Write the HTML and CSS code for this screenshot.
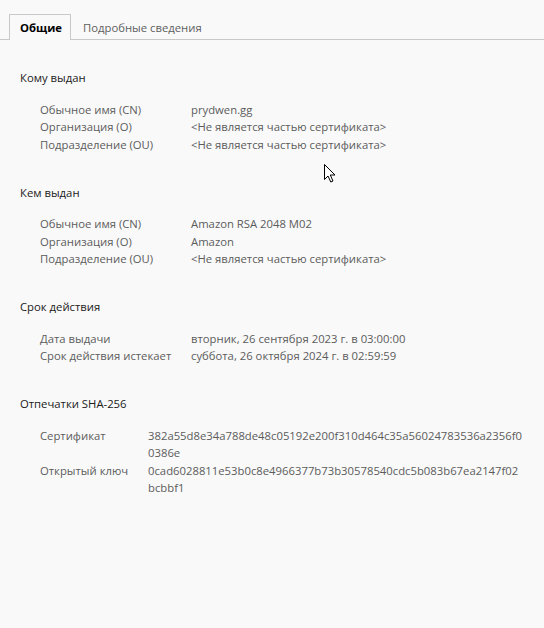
FILE: index.html
```html
<!DOCTYPE html>
<html lang="ru">
<head>
<meta charset="utf-8">
<title>Сертификат</title>
<link rel="stylesheet" href="styles.css">
</head>
<body>
<div class="tabs">
  <div class="tab active">Общие</div>
  <div class="tab">Подробные сведения</div>
</div>
<main class="content">
  <section class="section">
    <h2 class="heading">Кому выдан</h2>
    <div class="grid">
      <div class="label">Обычное имя (CN)</div><div class="value">prydwen.gg</div>
      <div class="label">Организация (O)</div><div class="value">&lt;Не является частью сертификата&gt;</div>
      <div class="label">Подразделение (OU)</div><div class="value">&lt;Не является частью сертификата&gt;</div>
    </div>
  </section>
  <section class="section">
    <h2 class="heading">Кем выдан</h2>
    <div class="grid">
      <div class="label">Обычное имя (CN)</div><div class="value">Amazon RSA 2048 M02</div>
      <div class="label">Организация (O)</div><div class="value">Amazon</div>
      <div class="label">Подразделение (OU)</div><div class="value">&lt;Не является частью сертификата&gt;</div>
    </div>
  </section>
  <section class="section">
    <h2 class="heading">Срок действия</h2>
    <div class="grid">
      <div class="label">Дата выдачи</div><div class="value">вторник, 26 сентября 2023 г. в 03:00:00</div>
      <div class="label">Срок действия истекает</div><div class="value">суббота, 26 октября 2024 г. в 02:59:59</div>
    </div>
  </section>
  <section class="section">
    <h2 class="heading">Отпечатки SHA-256</h2>
    <div class="grid grid-hash">
      <div class="label">Сертификат</div>
      <div class="value"><span class="hash-line">382a55d8e34a788de48c05192e200f310d464c35a56024783536a2356f0</span><span class="hash-line">0386e</span></div>
      <div class="label">Открытый ключ</div>
      <div class="value"><span class="hash-line">0cad6028811e53b0c8e4966377b73b30578540cdc5b083b67ea2147f02</span><span class="hash-line">bcbbf1</span></div>
    </div>
  </section>
</main>
<svg class="cursor" width="14" height="21" viewBox="0 0 14 21" aria-hidden="true">
  <path d="M1.5 1.5 L1.5 16.5 L5 13 L7.8 19 L10 18 L7.3 12 L12 12 Z" fill="#fff" stroke="#000" stroke-width="1" stroke-linejoin="miter"/>
</svg>
</body>
</html>
```
FILE: styles.css
```css
html, body {
  margin: 0;
  padding: 0;
  background: #f9f9f9;
}
body {
  font-family: "Open Sans", "Noto Sans", sans-serif;
  font-size: 11.3px;
  line-height: 17.5px;
  color: #1b1b1b;
  position: relative;
  min-height: 628px;
}
.tabs {
  display: flex;
  padding: 14px 0 0 9px;
  border-bottom: 1px solid #c9c9c9;
  height: 25px;
  box-sizing: content-box;
}
.tab {
  height: 25px;
  box-sizing: border-box;
  padding: 4px 11px 0 11px;
  color: #5f5f5f;
  border: 1px solid transparent;
  border-bottom: none;
}
.tab.active {
  color: #000;
  font-weight: 700;
  border-color: #c9c9c9;
  background: #f9f9f9;
  height: 26px;
  margin-bottom: -1px;
  padding-left: 10px;
  padding-right: 8px;
}
.content {
  padding: 29px 20px 0 20px;
}
.section {
  margin-bottom: 30.5px;
}
.heading {
  margin: 0 0 14px 0;
  font-size: 11.3px;
  font-weight: 400;
  color: #1b1b1b;
}
.grid {
  display: grid;
  grid-template-columns: 151px 1fr;
  padding-left: 20px;
  color: #5c5c5c;
}
.grid-hash {
  grid-template-columns: 108px 1fr;
}
.hash-line {
  display: block;
  white-space: nowrap;
}
.cursor {
  position: absolute;
  left: 323px;
  top: 163px;
}
```
